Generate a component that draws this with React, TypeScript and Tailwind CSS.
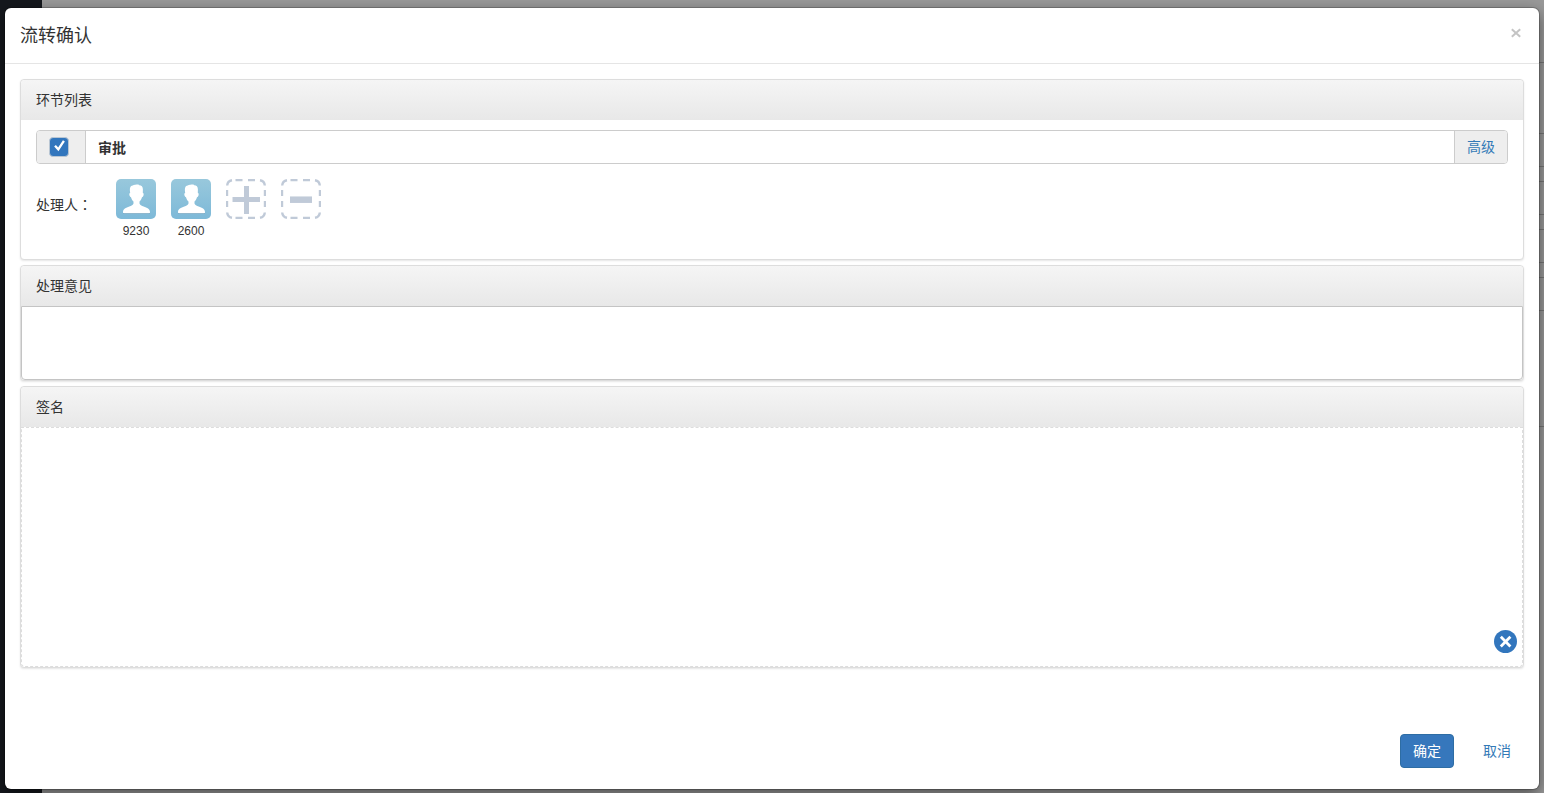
import { useState } from 'react';
import type { ReactNode } from 'react';

type Handler = { id: string; name: string };

const INITIAL_HANDLERS: Handler[] = [
  { id: 'u1', name: '9230' },
  { id: 'u2', name: '2600' },
];

export default function App() {
  const [checked, setChecked] = useState(true);
  const [handlers, setHandlers] = useState<Handler[]>(INITIAL_HANDLERS);
  const [opinion, setOpinion] = useState('');

  const addHandler = () =>
    setHandlers((list) => [...list, { id: `u${list.length + 1}`, name: '2600' }]);
  const removeHandler = () => setHandlers((list) => list.slice(0, -1));

  return (
    <div className="relative flex min-h-screen flex-col font-['Liberation_Sans','Noto_Sans_CJK_SC',sans-serif] text-sm leading-5 text-[#333]">
      <Backdrop />

      <div
        role="dialog"
        aria-labelledby="dialog-title"
        className="relative mx-[5px] mt-2 mb-1 flex flex-1 flex-col rounded-md bg-white shadow-[0_0_0_1px_rgba(0,0,0,0.2),0_5px_15px_rgba(0,0,0,0.5)]"
      >
        {/* Header */}
        <header className="flex items-start justify-between border-b border-[#e5e5e5] px-[15px] pt-4 pb-[14px]">
          <h4 id="dialog-title" className="text-lg leading-[25px]">流转确认</h4>
          <button type="button" aria-label="关闭" className="p-0.5 text-[#c4c4c4] hover:text-[#888]">
            <svg className="h-3 w-3" viewBox="0 0 12 12" fill="none" stroke="currentColor" strokeWidth="2">
              <path d="M1.8 3.3 10.2 10.700M10.2 3.3 1.8 10.700" />
            </svg>
          </button>
        </header>

        {/* Body */}
        <div className="flex flex-1 flex-col gap-[5px] px-[15px] pt-[15px]">
          <Panel title="环节列表">
            <div className="px-[15px] pt-2.5 pb-[18px]">
              <div className="flex h-[34px] overflow-hidden rounded border border-[#ccc]">
                <div className="flex w-[49px] items-center border-r border-[#ccc] bg-[#eee] pl-3">
                  <span className="grid">
                    <input
                      id="stage"
                      type="checkbox"
                      checked={checked}
                      onChange={(e) => setChecked(e.target.checked)}
                      className="col-start-1 row-start-1 h-5 w-5 appearance-none rounded border border-[#b9c6d3] bg-white checked:bg-[#3276bd]"
                    />
                    {checked && (
                      <svg className="pointer-events-none col-start-1 row-start-1 h-5 w-5" viewBox="0 0 20 20" fill="none">
                        <path d="M6 8.800 9.300 12.400 14.900 3.800" stroke="#fff" strokeWidth="2.3" />
                      </svg>
                    )}
                  </span>
                </div>
                <label htmlFor="stage" className="flex flex-1 items-center px-3 pt-px font-bold">审批</label>
                <button type="button" className="border-l border-[#ccc] bg-[#eee] px-3 text-[#337ab7]">高级</button>
              </div>

              <div className="mt-[15px] flex items-start">
                <span className="w-20 pt-[15px]">
                  处理人<span className="font-['Noto_Sans_CJK_TC',sans-serif]" lang="zh-Hant">：</span>
                </span>
                <ul className="flex gap-[15px]">
                  {handlers.map((h) => (
                    <li key={h.id} className="flex w-10 flex-col items-center">
                      <Avatar />
                      <span className="pt-0.5 text-xs leading-5">{h.name}</span>
                    </li>
                  ))}
                  <li>
                    <button type="button" aria-label="添加" onClick={addHandler} className="block">
                      <DashedIcon>
                        <path d="M20.5 7v28M6.500 20.5h27.500" strokeWidth="5" />
                      </DashedIcon>
                    </button>
                  </li>
                  <li>
                    <button type="button" aria-label="移除" onClick={removeHandler} className="block">
                      <DashedIcon>
                        <path d="M9 20.700h22" strokeWidth="6.500" />
                      </DashedIcon>
                    </button>
                  </li>
                </ul>
              </div>
            </div>
          </Panel>

          <Panel title="处理意见">
            <textarea
              aria-label="处理意见"
              value={opinion}
              onChange={(e) => setOpinion(e.target.value)}
              className="block h-[74px] w-full resize-none rounded-b border border-[#c4c4c4] px-3 py-1.5 outline-none"
            />
          </Panel>

          <Panel title="签名">
            <div className="flex h-60 items-end justify-end rounded-b border border-dashed border-[#ddd] pr-1 pb-3">
              <button type="button" aria-label="清除签名">
                <svg className="h-6 w-6" viewBox="0 0 24 24">
                  <circle cx="11.500" cy="11.500" r="11.500" fill="#3276bd" />
                  <path d="M6.800 6.800l9.600 9.600M16.400 6.800l-9.600 9.600" stroke="#fff" strokeWidth="2.800" />
                </svg>
              </button>
            </div>
          </Panel>
        </div>

        {/* Footer */}
        <footer className="flex justify-end gap-4 px-[15px] pt-[15px] pb-[21px]">
          <button type="button" className="rounded border border-[#2e6da4] bg-[#3677bc] px-3 py-1.5 text-white hover:bg-[#286090]">
            确定
          </button>
          <button type="button" className="rounded border border-transparent px-3 py-1.5 text-[#337ab7] hover:underline">
            取消
          </button>
        </footer>
      </div>
    </div>
  );
}

// Dimmed page behind the dialog: dark side menu + form rows
function Backdrop() {
  return (
    <div aria-hidden="true" className="absolute inset-0 flex overflow-hidden bg-[#999]">
      <div className="w-[42px] bg-[#15181d]" />
      <div className="flex flex-1 flex-col divide-y divide-[#777]">
        <div className="h-[63px]" />
        <div className="h-[71px]" />
        <div className="h-[33px]" />
        <div className="h-[15px]" />
        <div className="h-[33px]" />
        <div className="h-[15px]" />
        <div className="h-[33px]" />
        <div className="h-[15px]" />
        <div className="h-[33px]" />
        <div className="h-[116px]" />
        <div className="flex-1" />
      </div>
    </div>
  );
}

function Panel({ title, children }: { title: string; children: ReactNode }) {
  return (
    <section className="rounded border border-[#ddd] bg-white shadow-[0_1px_2px_rgba(0,0,0,0.1)]">
      <h5 className="rounded-t bg-linear-to-b from-[#f5f5f5] to-[#e8e8e8] px-[15px] py-2.5">{title}</h5>
      {children}
    </section>
  );
}

function Avatar() {
  return (
    <svg className="h-10 w-10" viewBox="0 0 40 40">
      <defs>
        <linearGradient id="avatar-bg" x1="0" y1="0" x2="0" y2="1">
          <stop offset="0" stopColor="#98c8dc" />
          <stop offset="1" stopColor="#7db9d8" />
        </linearGradient>
      </defs>
      <rect width="40" height="40" rx="5" fill="url(#avatar-bg)" />
      <path d="M7 33.8c0 .9.4 1.200 1.200 1.200h24.600c.8 0 1.200-.3 1.200-1.200z" fill="#6a9fbd" />
      <path
        d="M14.300 8.200c.6-1.500 2.200-1.600 3.400-2.200 1.800-.7 3.700-.7 5.300-.2l.2.500c2.400 0 3.600 1.500 3.700 3.900l-.1 3.600c.9.3 1.100 1.500.6 2.900-.3.900-.8 1.400-1.400 1.500-.5 1.900-1.400 3.200-2.500 4.300v1.900c.4 1.500 2.100 2.400 4.200 3.100 3.300 1.200 6.300 2.100 6.300 5.800v.3c0 .4-.3.600-.8.600H7.800c-.5 0-.8-.2-.8-.6v-.3c0-3.700 3-4.600 6.300-5.800 2.100-.7 3.800-1.600 4.200-3.100v-1.900c-1.100-1.100-2-2.400-2.500-4.300-.6-.1-1.100-.6-1.400-1.500-.5-1.400-.3-2.600.6-2.900-.3-1.900-.6-4 .1-5.600z"
        fill="#fff"
      />
    </svg>
  );
}

function DashedIcon({ children }: { children: ReactNode }) {
  return (
    <svg className="h-10 w-10" viewBox="0 0 40 40" fill="none" stroke="#c0cad8">
      <path d="M9.500 1h7M22 1h7M9.500 39h7M22 39h7M1 11v6M1 22v6M39 11v6M39 22v6" strokeWidth="2.400" />
      <path d="M1.200 6.500Q1.500 2 6 1.200M34 1.200Q38.500 2 38.800 6.500M1.200 33.500Q1.500 38 6 38.800M34 38.800Q38.500 38 38.800 33.500" strokeWidth="2.400" />
      {children}
    </svg>
  );
}
